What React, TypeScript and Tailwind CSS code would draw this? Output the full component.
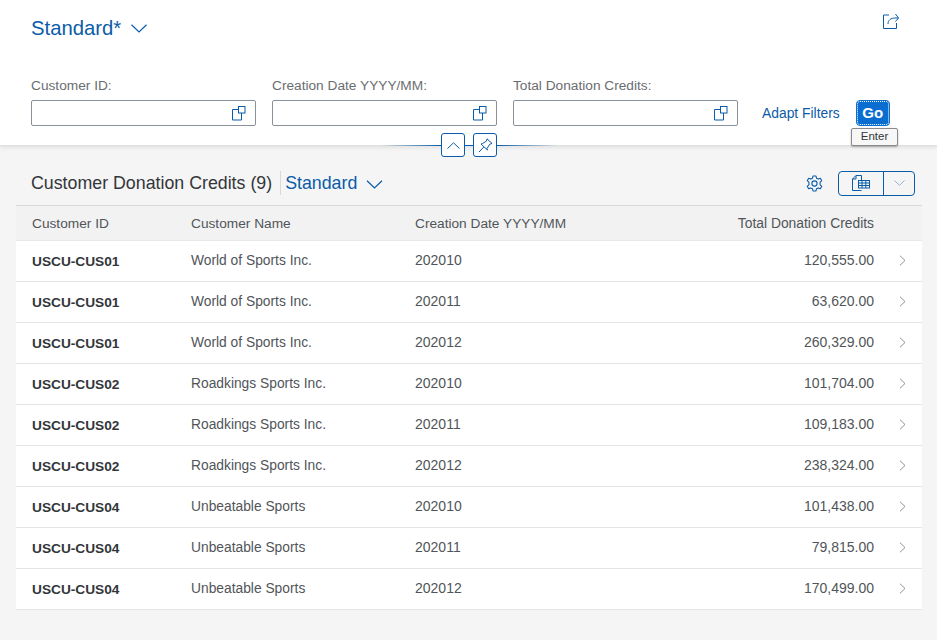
import React from "react";

const font = { fontFamily: '"Liberation Sans", Arial, sans-serif' };

const rows = [
  ["USCU-CUS01", "World of Sports Inc.", "202010", "120,555.00"],
  ["USCU-CUS01", "World of Sports Inc.", "202011", "63,620.00"],
  ["USCU-CUS01", "World of Sports Inc.", "202012", "260,329.00"],
  ["USCU-CUS02", "Roadkings Sports Inc.", "202010", "101,704.00"],
  ["USCU-CUS02", "Roadkings Sports Inc.", "202011", "109,183.00"],
  ["USCU-CUS02", "Roadkings Sports Inc.", "202012", "238,324.00"],
  ["USCU-CUS04", "Unbeatable Sports", "202010", "101,438.00"],
  ["USCU-CUS04", "Unbeatable Sports", "202011", "79,815.00"],
  ["USCU-CUS04", "Unbeatable Sports", "202012", "170,499.00"],
];

function Chevron({ w = 16, h = 9, c = "#0a5ca8" }: { w?: number; h?: number; c?: string }) {
  return (
    <svg width={w} height={h} viewBox="0 0 16 9" fill="none" stroke={c} strokeWidth="1.2">
      <path d="M0.5 0.8 L8 8 L15.5 0.8" />
    </svg>
  );
}

function CopyIcon() {
  return (
    <svg width="15" height="15" viewBox="0 0 15 15" fill="none" stroke="#0a5ca8" strokeWidth="1">
      <rect x="7.5" y="0.5" width="6.5" height="6.5" />
      <path d="M7.5 3.5 H1.5 V14 H10.5 V7" />
    </svg>
  );
}

function Field({ label }: { label: string }) {
  return (
    <div className="w-[225px] flex flex-col">
      <div className="text-[13.7px] leading-[18px] pt-px text-[#6a6d70] whitespace-nowrap mb-[5px]">{label}</div>
      <div className="h-[26px] border border-[#89919a] rounded-[2px] bg-white flex items-center justify-end pr-[9px]">
        <CopyIcon />
      </div>
    </div>
  );
}

export default function App() {
  return (
    <div className="w-[937px] h-[640px] bg-[#f5f5f5] overflow-hidden flex flex-col" style={font}>
      <div className="relative h-[146px] shrink-0 bg-white border-b border-[#e0e0e0] shadow-[0_2px_4px_rgba(0,0,0,0.08)] pl-[31px] pr-[38px]">
        <div className="flex justify-between pt-[14px] h-[76px] items-start">
          <div className="flex items-center gap-[10px] text-[20.3px] leading-[28px] text-[#0a5ca8]">
            <span>Standard*</span>
            <Chevron />
          </div>
          <svg width="16" height="16" viewBox="0 0 16 16" fill="none" stroke="#0a5ca8" strokeWidth="1" className="-mt-px">
            <path d="M6 2 H0.5 V15.5 H13.5 V10" />
            <path d="M5 11 C5 7 8 5 12 5 H15.5 M12.5 1 L15.5 5 L12.5 8.5" />
          </svg>
        </div>
        <div className="flex items-start gap-[16px]">
          <Field label="Customer ID:" />
          <Field label="Creation Date YYYY/MM:" />
          <Field label="Total Donation Credits:" />
          <div className="flex items-center h-[26px] mt-[24px] ml-[8px] gap-[16px]">
            <span className="text-[13.85px] text-[#0a5ca8] whitespace-nowrap">Adapt Filters</span>
            <div className="w-[34px] h-[26px] rounded-[4px] bg-[#0a6ed1] border border-[#0a6ed1] outline outline-1 outline-dotted outline-white -outline-offset-2 flex items-center justify-center text-white text-[15px] font-bold">
              Go
            </div>
          </div>
        </div>
        <div className="absolute left-[851px] top-[128px] h-[18px] w-[47px] border border-[#8a8a8a] rounded-[2px] bg-[#f7f7f7] shadow-[0_1px_2px_rgba(0,0,0,0.3)] flex items-center justify-center text-[11.5px] text-[#32363a]">
          Enter
        </div>
        <div className="absolute left-[380px] top-[145px] h-px w-[61px] bg-gradient-to-r from-transparent to-[#0a5ca8]" />
        <div className="absolute left-[497px] top-[145px] h-px w-[61px] bg-gradient-to-l from-transparent to-[#0a5ca8]" />
        <div className="absolute left-[465px] top-[145px] h-px w-[8px] bg-[#0a5ca8]" />
        <div className="absolute left-[441px] top-[133px] w-[24px] h-[24px] rounded-[3px] border border-[#0a5ca8] bg-white flex items-center justify-center">
          <svg width="13" height="7" viewBox="0 0 13 7" fill="none" stroke="#0a5ca8" strokeWidth="1">
            <path d="M0.5 6.5 L6.5 0.8 L12.5 6.5" />
          </svg>
        </div>
        <div className="absolute left-[473px] top-[133px] w-[24px] h-[24px] rounded-[3px] border border-[#0a5ca8] bg-white flex items-center justify-center">
          <svg width="15" height="15" viewBox="0 0 15 15" fill="none" stroke="#0a5ca8" strokeWidth="1">
            <path d="M9 0.8 L14 5.5 L11.8 6.2 L9 10.5 L9.5 12 L3 6 L4.5 5.5 L8.5 3 Z" />
            <path d="M5.8 9 L1 14" />
          </svg>
        </div>
      </div>

      <div className="flex-1 flex flex-col">
        <div className="h-[59px] shrink-0 pl-[31px] pr-[22px] flex items-center justify-between pt-[15px]">
          <div className="flex items-center">
            <span className="text-[17.8px] text-[#32363a] whitespace-nowrap">Customer Donation Credits (9)</span>
            <span className="w-px h-[24px] bg-[#d9d9d9] ml-[8px] mr-[4px]" />
            <span className="text-[17.8px] text-[#0a5ca8]">Standard</span>
            <span className="ml-[9px] mt-[3px]">
              <Chevron w={17} h={9} />
            </span>
          </div>
          <div className="flex items-center">
            <svg width="17" height="17" viewBox="0 0 17 17" fill="none" stroke="#0a5ca8" strokeWidth="1.1">
              <circle cx="8.5" cy="8.5" r="2.6" />
              <path d="M7 1 H10 L10.5 3.2 L12.3 4.1 L14.3 3.2 L15.8 5.7 L14.1 7.2 V9.8 L15.8 11.3 L14.3 13.8 L12.3 12.9 L10.5 13.8 L10 16 H7 L6.5 13.8 L4.7 12.9 L2.7 13.8 L1.2 11.3 L2.9 9.8 V7.2 L1.2 5.7 L2.7 3.2 L4.7 4.1 L6.5 3.2 Z" strokeLinejoin="round" />
            </svg>
            <div className="ml-[15px] w-[77px] h-[25px] border border-[#0a5ca8] rounded-[4px] flex">
              <div className="w-[45px] border-r border-[#0a5ca8] flex items-center justify-center">
                <svg width="18" height="16" viewBox="0 0 18 16" fill="none" stroke="#0a5ca8" strokeWidth="1">
                  <path d="M9.5 5 V0.5 H4 L0.5 4 V15.5 H9.5" />
                  <path d="M4 0.5 V4 H0.5" />
                  <rect x="6.5" y="5.5" width="11" height="7.5" fill="#f5f5f5" />
                  <path d="M6.5 8 H17.5 M6.5 10.5 H17.5 M10 5.5 V13 M13.8 5.5 V13" />
                </svg>
              </div>
              <div className="flex-1 flex items-center justify-center">
                <Chevron w={11} h={6} c="#7da6cc" />
              </div>
            </div>
          </div>
        </div>

        <div className="ml-[16px] w-[906px] border-t border-[#d9d9d9]">
          <div className="flex h-[34px] items-center bg-[#f2f2f2] text-[13.7px] text-[#515559]">
            <div className="w-[159px] pl-[16px] pt-[2px]">Customer ID</div>
            <div className="w-[224px] pl-[16px] pt-[2px]">Customer Name</div>
            <div className="w-[200px] pl-[16px] pt-[2px] whitespace-nowrap">Creation Date YYYY/MM</div>
            <div className="w-[275px] text-right text-[13.85px]">Total Donation Credits</div>
          </div>
          <div className="bg-white border-t border-[#e8e8e8]">
            {rows.map((r, i) => (
              <div key={i} className="flex h-[41px] items-center border-b border-[#e4e4e4] text-[13.8px] text-[#32363a]">
                <div className="w-[159px] pl-[16px] pt-[2px] text-[13.7px] font-bold whitespace-nowrap">{r[0]}</div>
                <div className="w-[224px] pl-[16px] text-[#515559]">{r[1]}</div>
                <div className="w-[200px] pl-[16px] pb-[2px] text-[14px] text-[#515559]">{r[2]}</div>
                <div className="w-[275px] pb-[2px] text-[14px] text-right text-[#515559]">{r[3]}</div>
                <div className="ml-[25px] pb-[2px]">
                  <svg width="7" height="11" viewBox="0 0 7 11" fill="none" stroke="#89919a" strokeWidth="1" className="block">
                    <path d="M1 0.7 L6 5.5 L1 10.3" />
                  </svg>
                </div>
              </div>
            ))}
          </div>
        </div>
      </div>
    </div>
  );
}
